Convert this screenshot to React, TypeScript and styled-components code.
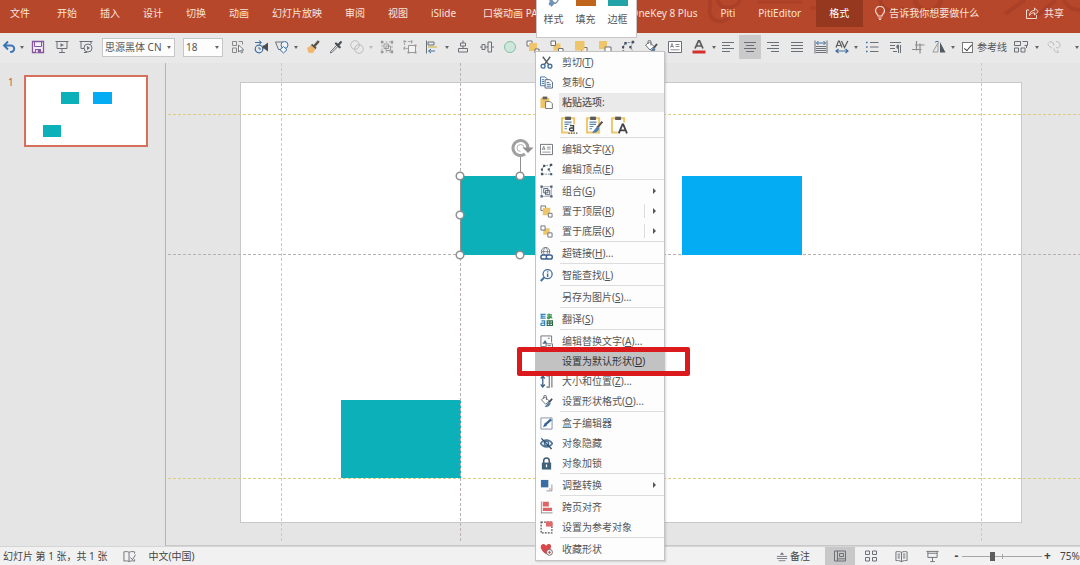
import React from 'react';
import styled, { createGlobalStyle, css } from 'styled-components';

const GlobalStyle = createGlobalStyle`
  * { box-sizing: border-box; }
  html, body, #root { height: 100%; }
  body { margin: 0; overflow: hidden; }
  body, button, select, input {
    font-family: "Noto Sans", "Noto Sans CJK SC", sans-serif;
    font-size: 10px;
    line-height: 14px;
  }
  button, select {
    margin: 0; padding: 0; border: 0; background: none; color: inherit; cursor: pointer;
  }
  ul { margin: 0; padding: 0; list-style: none; }
`;

/* ---------- icons ---------- */

const G = '#6b6f76';
const B = '#3f6f9f';
const Y = '#eec56a';

const drawings: Record<string, React.ReactNode> = {
  undo: <path d="M6 1.500 2 5.500 6 9.500M2.500 5.500H9a3.200 3.200 0 0 1 0 6.400H8" stroke="#3a75b5" strokeWidth="1.900" />,
  save: (
    <>
      <path d="M1.500 1.500h11v11h-11z" stroke="#84579e" strokeWidth="1.300" fill="#f4eef7" />
      <path d="M3.500 2v4.500h7V2" stroke="#84579e" />
      <path d="M4 9h6v3.500H4z" fill="#84579e" />
      <path d="M5.200 10h1.500v2.500H5.200z" fill="#fff" />
    </>
  ),
  show: (
    <>
      <path d="M.5 1.500h13M2 1.500v7h10v-7M7 8.500v4M4 12.500h6" stroke={G} />
      <path d="M5.500 3.200v3.800l3.500-1.900z" fill={G} />
    </>
  ),
  showFrom: (
    <>
      <path d="M.5 1.500h13M2 1.500v7h3M12 1.500V4M5 12.500h3" stroke={G} />
      <circle cx="9" cy="8" r="4" stroke={G} />
      <path d="M8 6v4l3-2z" fill={G} />
    </>
  ),
  pick: (
    <>
      <path d="M1.500 1.500h4v4h-4zM1.500 8h4v4.500h-4zM7.500 1.500h4v3" stroke="#8a8a8a" />
      <path d="M7.500 5v7l1.800-1.700 1.200 2.700 1.200-.6-1.200-2.400h2.300z" fill="#fff" stroke={G} strokeWidth=".9" />
    </>
  ),
  anim: (
    <>
      <circle cx="5" cy="9" r="3.800" stroke={B} strokeWidth="1.200" />
      <path d="M5 7v2h2M1 2.500h6M5 .5l2.500 2L5 4.500" stroke={B} />
      <path d="M8.500 5.500h1.500L14 2.500v9L10 8.500H8.500z" fill="#4b4f55" />
    </>
  ),
  shapes: (
    <>
      <path d="M.5 2h7.500v7.500H3.500z" stroke={G} />
      <circle cx="9.500" cy="5" r="3.500" stroke={B} fill="#edf4fa" />
      <path d="m8.500 6.500 3.500 3.200L8.500 13 5 9.700z" stroke={B} fill="#edf4fa" />
    </>
  ),
  brush: (
    <>
      <path d="M12.800 1 8 6.500" stroke="#59534a" strokeWidth="2.600" />
      <path d="m5.500 4.500 4.500 4" stroke="#59534a" strokeWidth="2" />
      <path d="M5 5.500 1 8l1.500 4.800L7 13l2.300-3.800z" fill="#efb76b" />
    </>
  ),
  dropper: (
    <>
      <path d="M8 5 2 11.200 1.300 13l1.800-.7L9.200 6.200" stroke={G} />
      <path d="m7 3.500 3.700 3.700M9 5.200l2.800-3" stroke="#4b4f55" strokeWidth="2.300" strokeLinecap="round" />
    </>
  ),
  union: (
    <>
      <circle cx="5" cy="5" r="4.300" stroke="#bcbcbc" />
      <circle cx="9" cy="9" r="4.300" stroke="#bcbcbc" />
    </>
  ),
  groupGrey: (
    <>
      <path d="M2 2h10v10H2z" stroke="#aaa" strokeDasharray="2 1.500" />
      <path d="M4 4h4.500v4.500H4zM6 6h4.500v4.500H6z" stroke="#999" />
      <path d="M.8.8h2.400v2.400H.8zM10.800.8h2.400v2.400h-2.400zM.8 10.800h2.400v2.400H.8zM10.800 10.800h2.400v2.400h-2.400z" fill="#999" />
    </>
  ),
  ungroupGrey: (
    <>
      <path d="M1.500 1.500h7v7h-7z" stroke="#aaa" strokeDasharray="2 1.500" />
      <path d="M5.500 5.500h7v7h-7z" stroke="#999" fill="#f3f3f3" />
      <path d="M.5.5h2v2h-2zM7.500.5h2v2h-2zM.5 7.500h2v2h-2zM11.500 4.500h2v2h-2zM4.500 11.500h2v2h-2zM11.500 11.500h2v2h-2z" fill="#999" />
    </>
  ),
  alignObj: (
    <>
      <path d="M1.500.5v13" stroke={G} />
      <path d="M3 2h6v3H3z" stroke={G} />
      <path d="M3 6h9v2H3z" fill="#d8cc8e" />
      <path d="M4 11h6M6 9l-2.500 2L6 13" stroke={B} />
    </>
  ),
  alignMid: <path d="M7 .5V3M7 6v2.500M4.500 3h5v3h-5zM2.500 8.500h9v3.500h-9z" stroke={G} />,
  distribute: <path d="M0 7h2M5 7h3M11.500 7H14M2 4.500h3v5H2zM8 2h3.500v10H8z" stroke={G} />,
  circle: <circle cx="7" cy="7" r="5.500" stroke="#86c1a6" fill="#cfe6db" />,
  front: (
    <>
      <path d="M1 1h5v5H1z" stroke={G} fill="#fff" />
      <path d="M3 3h8v8H3z" fill={Y} />
      <path d="M9 9h4v4H9z" stroke={G} fill="#fff" />
    </>
  ),
  back: (
    <>
      <path d="M3.500 3.500h7v7h-7z" fill={Y} />
      <path d="M1 1h4.500v4.500H1zM8.500 8.500H13V13H8.500z" stroke={G} fill="#fff" />
    </>
  ),
  forward: (
    <>
      <path d="M7.500 7.500H13V13H7.500z" stroke={G} fill="#fff" />
      <path d="M1 1h9.500v9.500H1z" fill={Y} />
    </>
  ),
  backward: (
    <>
      <path d="M1 1h8v8H1z" fill={Y} />
      <path d="M7 7h6v6H7z" stroke={G} fill="#fff" />
    </>
  ),
  points: (
    <>
      <path d="M2.200 12V6.500L4.500 3 12 2 9.500 7l2.700 5H2.200" stroke="#7389a0" strokeDasharray="2 1" />
      <path d="M1 10.800h2.400v2.400H1zM3.300 2h2.400v2.400H3.300zM1 6h2.200v2.200H1zM10.800.8h2.400v2.400h-2.400zM8.300 6h2.200v2.200H8.300zM11 11h2.200v2.200H11z" fill="#44515f" />
    </>
  ),
  fill: (
    <>
      <path d="m1.500 5 4-3L10 6.500 6 10z" stroke={G} fill="#fff" />
      <path d="M4 4V1.800a1.500 1.500 0 0 1 3 0V5.500" stroke={G} />
      <path d="M13 4 9.800 8" stroke="#4b4f55" strokeWidth="2" />
      <path d="M9.500 7.200 5 13c3.500.5 6-1 6.500-4z" fill="#5b7f9e" />
    </>
  ),
  textbox: (
    <>
      <path d="M.5 1.500h13v11H.5z" stroke={G} fill="#fff" />
      <path d="M2.500 7.500 4 3.500l1.500 4M3 6.500h2M7.500 4.500h4M7.500 6.500h4M2.500 9.800h9" stroke={G} strokeWidth=".8" />
    </>
  ),
  fontColor: (
    <>
      <path d="M3 8.500 6.500.8h1L11 8.500M4.500 6h5" stroke="#5a5a5a" strokeWidth="1.700" />
      <path d="M.5 10.500h13v3H.5z" fill="#d5302c" />
    </>
  ),
  left: <path d="M1 2.500h12M1 5.500h8M1 8.500h12M1 11.500h8" stroke={G} />,
  center: <path d="M1 2.500h12M3 5.500h8M1 8.500h12M3 11.500h8" stroke={G} />,
  right: <path d="M1 2.500h12M5 5.500h8M1 8.500h12M5 11.500h8" stroke={G} />,
  justify: <path d="M1 2.500h12M1 5.500h12M1 8.500h12M1 11.500h12" stroke={G} />,
  spread: (
    <>
      <path d="M1 .5v13M13 .5v13M2 6.500h10M2 8.500h10M2 10.500h10M2 12.500h10" stroke={G} />
      <path d="M2.500 3h9M4.500 1l-2 2 2 2M9.500 1l2 2-2 2" stroke={B} />
    </>
  ),
  spacing: (
    <>
      <path d="M1 7.500 3.500 1h.8L7 7.500M2 5.500h4M6.500 1 9.500 7.500 12.800 1" stroke="#5a5a5a" strokeWidth="1.200" />
      <path d="M1 11h12M3.500 9 1 11l2.500 2M10.500 9l2.500 2-2.500 2" stroke={B} strokeWidth="1.200" />
    </>
  ),
  bullets: (
    <>
      <path d="M5 2.500h8.500M5 7h8.500M5 11.500h8.500" stroke={G} />
      <path d="M1 1.700h1.600v1.600H1zM1 6.200h1.600v1.600H1zM1 10.700h1.600v1.600H1z" fill={B} />
    </>
  ),
  indent: (
    <>
      <path d="M2 2.500h11M2 5.500h5M2 8.500h5M5 11.500h4" stroke={G} />
      <path d="M10.500 5v8M12.500 5v8" stroke={G} />
      <path d="M10.500 4.500v4.500a2 2 0 0 1 0-4.500z" fill={G} />
    </>
  ),
  crop: <path d="M5.500 1v9.500M9 3.500V13.500M1 9.500h9.500M4 5h9.500" stroke="#8d8d8d" strokeWidth="1.200" />,
  flip: (
    <>
      <path d="M6 3v9H.8z" stroke="#9a9a9a" />
      <path d="M8 2v10.500h5.500z" fill="#4f5a63" />
      <path d="M3 2.500C4 1 6 1 7 2.500" stroke={B} />
    </>
  ),
  arrange: <path d="M.5 1.500h6v4h-6zM8.500 1.500h5v4h-3M.5 8h4v4h-4zM7 8h4v4H7zM12.500 5.500V8" stroke={G} />,
  rotate: (
    <path d="M3 1.500a4 4 0 0 1 4 4M1 3.500l2-2M9 1.500c3 0 4 2 4 4s-2 3-4 2M5 8c-2-1-4-2-4-4M7 8.500c0 3 2 4 4 4M10 10l2 2.500" stroke="#bcbcbc" />
  ),
  cut: (
    <>
      <path d="M3 .8 9.500 9.500M11 .8 4.500 9.500" stroke="#55585d" strokeWidth="1.500" />
      <circle cx="3.300" cy="11" r="2.100" stroke={B} strokeWidth="1.400" />
      <circle cx="10.700" cy="11" r="2.100" stroke={B} strokeWidth="1.400" />
    </>
  ),
  copy: (
    <>
      <path d="M.6 1h5l2 2v7.500h-7z" stroke={B} fill="#fff" />
      <path d="M5.500 4h5.300l2.600 2.500v6.500H5.500z" stroke="#50607a" fill="#fff" />
      <path d="M2 4h2.500M2 6h2.500M2 8h2.500M7.200 7h3M7.200 9h4.500M7.200 11h4.500" stroke={B} />
    </>
  ),
  paste: (
    <>
      <path d="M.5 2h9.500v11H.5z" fill={Y} />
      <path d="M2.800.6h5v3h-5z" fill="#65615a" />
      <path d="M6 6h5l2.300 2.300v5.200H6z" stroke={G} fill="#fff" />
    </>
  ),
  group: (
    <>
      <path d="M1.800 1.800h10.400v10.400H1.800z" stroke="#a4abb6" />
      <path d="M4 3.800h4.500v4.700H4zM6 5.800h4.500v4.700H6z" stroke="#4c5e78" />
      <path d="M.5.5h2.500V3H.5zM11 .5h2.500V3H11zM.5 11H3v2.500H.5zM11 11h2.500v2.500H11z" fill="#4c5e78" />
    </>
  ),
  link: (
    <>
      <circle cx="6" cy="5" r="4.500" stroke={G} />
      <path d="M1.500 5h9M6 .5c-3 3-3 6 0 9M6 .5c3 3 3 6 0 9" stroke={G} strokeWidth=".9" />
      <rect x="1" y="8.500" width="6.500" height="4.500" rx="2" stroke="#3c5f92" strokeWidth="1.600" fill="#fff" />
      <rect x="6.800" y="8.500" width="6.400" height="4.500" rx="2" stroke="#3c5f92" strokeWidth="1.600" fill="#fff" />
    </>
  ),
  lookup: (
    <>
      <circle cx="8.200" cy="5.500" r="4.900" stroke="#45719f" strokeWidth="1.400" />
      <path d="M4.700 9 .8 13" stroke="#45719f" strokeWidth="2.200" />
      <path d="M8.200 2.500v1.300M8.200 4.800v3.700" stroke="#45719f" strokeWidth="1.600" />
    </>
  ),
  translate: (
    <>
      <path d="M.5 1.500h5.500M.5 3.500h5.500M.5 5.500h5.500M2 1v5" stroke="#2f86c2" strokeWidth="1.200" />
      <path d="M1.500 8.500h3.500v5H2.200a1.200 1.200 0 0 1 0-2.500H5" stroke="#2f86c2" strokeWidth="1.400" />
      <path d="M7.500 2h5.500M9.800.5v5.500M12 3C12 6 8 7 8 5.200S12.800 3.500 13 6" stroke="#3c9a50" strokeWidth="1.300" />
      <path d="M7.800 8.500h5.700v5H7.800zM7.800 11h5.700M10.600 8.500v5" stroke="#2d6a49" strokeWidth="1.300" />
    </>
  ),
  altText: (
    <>
      <path d="M6 12.500H1V1h11.500v7" stroke={G} />
      <path d="m2.500 9.500 3-4 2.500 4z" fill="#4b6b8a" />
      <path d="M8.500 3.500h2" stroke={G} />
      <path d="M6.500 9.500h7v4h-7zM8 11.500h4" stroke={G} fill="#fff" />
    </>
  ),
  size: (
    <>
      <path d="M3 1.500v11M.8 3.800 3 1.200l2.200 2.600M.8 10.200 3 12.800l2.200-2.600" stroke="#3e6388" strokeWidth="1.400" />
      <path d="M7 1h3v12H7M12.800.5v13" stroke={G} strokeWidth="1.200" />
    </>
  ),
  edit: (
    <>
      <path d="M1 1h12v12H1z" stroke="#7d8fa3" fill="#fff" />
      <path d="M12 2.500 6 8" stroke="#31628f" strokeWidth="2.400" />
      <path d="m5.200 6.500-2 4.500L7.500 9.500z" fill="#31628f" />
    </>
  ),
  hide: (
    <>
      <path d="M.5 7C4 2 10 2 13.500 7 10 12 4 12 .5 7z" stroke="#4c6f93" strokeWidth="1.500" />
      <circle cx="7" cy="7" r="2.300" stroke="#4c6f93" strokeWidth="1.600" />
      <path d="m1.500 1.500 11 11.500" stroke="#31506f" strokeWidth="1.500" />
    </>
  ),
  lock: (
    <>
      <path d="M4 6.500V4a3 3 0 0 1 6 0v2.500" stroke="#3e5b70" strokeWidth="1.600" />
      <path d="M2 6h10v7.500H2z" fill="#3f6277" />
      <path d="M6.300 8h1.400v3H6.300z" fill="#fff" />
    </>
  ),
  convert: (
    <>
      <path d="M1 1h8v8H1z" fill="#3a6ea5" />
      <path d="M12.800 6v6.800H7" stroke="#8793a0" />
      <path d="M10 10h1.500v1.500H10z" fill="#e0936b" />
    </>
  ),
  cross: (
    <>
      <path d="M1.500.5v13" stroke="#a98a8a" />
      <path d="M3 .8h6.500v5H3zM3 7.200h10v3.600H3z" fill="#dd6467" />
      <path d="M1.500 12.800h12" stroke="#8b8b8b" />
    </>
  ),
  refer: (
    <>
      <path d="M1.200 1.200h11.600v11.600H1.200z" stroke="#555" strokeWidth="1.400" strokeDasharray="2 1.200" />
      <path d="M6.500.5h7v5.500h-7z" fill="#e2666a" />
    </>
  ),
  heart: (
    <>
      <path d="M6.500 12C-1 7 0 2 3.200 1.200 5 .9 6 2.200 6.500 3.200 7 2.200 8 .9 10 1.200c3 .5 3 5.300-3.500 10.800z" fill="#d9484a" />
      <circle cx="10.200" cy="10" r="3.200" stroke="#6d6262" fill="#fff" />
      <path d="M10.200 8.300v3.400M8.500 10h3.400" stroke="#c9484a" />
    </>
  ),
  bulb: (
    <path d="M5 10c0-2-2.500-2.500-2.500-5.200a4.500 4.500 0 0 1 9 0C11.500 7.500 9 8 9 10zM5.200 12h3.600M6 13.500h2" stroke="#f6d9cd" strokeWidth="1.200" />
  ),
  share: (
    <path d="M4 4H1.500v8.500h10V9M4.500 9.500c0-3.500 2-5 5-5V2L13.200 5.500 9.500 9V6.800c-2.500 0-4 .7-5 2.700z" stroke="#f6d9cd" />
  ),
  spell: (
    <path d="M6.500 2.500v10M6.500 2.500C5 1.500 3 1.500 1 2v10c2-.5 4-.5 5.500.5M6.500 2.500C8 1.500 10.500 1.500 12.500 2v2M8 8l2.200 2.500L13.500 5M6.500 12.500c1.500-1 4-1 6-.5V10" stroke={G} />
  ),
  notes: (
    <>
      <path d="M1 7.500h12M1 9.900h12M3 12.500h8" stroke={G} />
      <path d="M4.500 5.500 7 2.500l2.500 3z" fill={G} />
    </>
  ),
  normal: <path d="M1.500 2h11v10h-11zM4.500 2v10M6.500 4.500h4v3h-4zM5 9.800h7" stroke={G} />,
  sorter: <path d="M1.500 2h4v3.500h-4zM8.500 2h4v3.500h-4zM1.500 8.500h4V12h-4zM8.500 8.500h4V12h-4z" stroke={G} />,
  reading: (
    <path d="M7 2.500v10.500M7 2.500C5 1.500 3 1.500 1 2v9.500C3 11 5 11.500 7 12.500 9 11.500 11 11 13 11.500V2C11 1.500 9 1.500 7 2.500M2.800 4.500h2.700M2.800 6.500h2.700M2.800 8.500h2.700M8.500 4.500h2.700M8.500 6.500h2.700M8.500 8.500h2.700" stroke={G} />
  ),
  slideshow: <path d="M.5 1.500h13M2 1.500v6.500h10V1.500M2 3.500h10M7 8v4.500M4.500 12.500h5" stroke={G} />,
  style: (
    <>
      <path d="M2 3c1 5 3 7 7 6M12 3c0 3-1 4-3 6" stroke="#7b8da3" strokeWidth="1.300" />
      <path d="M4 4.500 8 9l-3.500 4c-.5-2-2-1.500-3-2.500z" fill="#6f92b9" />
    </>
  ),
  pasteTheme: (
    <>
      <path d="M1.500 1.800h9.500v11H1.500z" stroke={Y} strokeWidth="1.500" fill="#fff" />
      <path d="M4 .5h4.500v2.600H4z" fill="#5b5b5b" />
      <path d="M3.500 4.800h5.500M3.500 6.500h5.500M3.500 8.200h2M3.500 9.900h2" stroke="#5b84ab" strokeWidth=".9" />
      <path d="M6.500 6.500h7v6.500h-7z" fill="#fff" />
      <path d="M7.800 7.500h2.700v4H8.500a1.100 1.100 0 0 1 0-2.200h2M6.500 13.300h1M8.500 13.300h1M10.500 13.300h1M12.500 13.300h1" stroke="#444" strokeWidth="1.100" />
    </>
  ),
  pasteSource: (
    <>
      <path d="M1.500 1.800h9.500v11H1.500z" stroke={Y} strokeWidth="1.500" fill="#fff" />
      <path d="M4 .5h4.500v2.600H4z" fill="#5b5b5b" />
      <path d="M3.500 4.800h5.500M3.500 6.500h5M3.500 8.200h3M3.500 9.900h2" stroke="#5b84ab" strokeWidth=".9" />
      <path d="M13.500 4.500 9.500 9" stroke="#555" strokeWidth="1.600" />
      <path d="M9.500 8 5.500 13c3 .5 5-1 5.500-3.500z" fill="#4a7cb0" />
    </>
  ),
  pasteText: (
    <>
      <path d="M6 12.800H1.500v-11H11V5" stroke={Y} strokeWidth="1.500" />
      <path d="M4 .5h4.500v2.600H4z" fill="#5b5b5b" />
      <path d="M6.800 13.500 9.700 6.500h.6l2.900 7M7.800 11.200h4.500" stroke="#444" strokeWidth="1.400" />
    </>
  ),
};

const Glyph = styled.svg`
  display: block;
  flex: none;
  fill: none;
`;

const Icon = ({ name, size = 14 }: { name: string; size?: number }) => (
  <Glyph width={size} height={size} viewBox="0 0 14 14" aria-hidden="true">
    {drawings[name]}
  </Glyph>
);

/* ---------- ribbon ---------- */

const Window = styled.div`
  position: relative;
  display: flex;
  flex-direction: column;
  height: 100%;
  min-height: 565px;
  overflow: hidden;
  background: #e6e5e6;
  color: #555;
`;

const Ribbon = styled.nav`
  position: relative;
  display: flex;
  flex: none;
  height: 33px;
  padding-right: 16px;
  background: #b7472b;
  color: #f9e4db;
  white-space: nowrap;
`;

const RibbonArt = styled.svg`
  position: absolute;
  top: 0;
  right: 0;
  fill: none;
  stroke: #aa4027;
`;

const Tab = styled.button<{ $active?: boolean; $lead?: number }>`
  position: relative;
  flex: none;
  height: 27px;
  margin-left: ${(p) => p.$lead ?? 0}px;
  padding: 0 13px 1px 10px;
  ${(p) => p.$active && css`background: #963820; color: #fff; padding: 0 14px 1px 13px;`}
`;

const TellMe = styled(Tab)`
  display: flex;
  align-items: center;
  gap: 2px;
`;

const Spacer = styled.div`
  flex: 1;
`;

const Share = styled(TellMe)`
  gap: 5px;
  padding: 0 0 2px;
`;

/* ---------- quick toolbar ---------- */

const Toolbar = styled.div`
  display: flex;
  flex: none;
  align-items: center;
  height: 30px;
  padding-bottom: 2px;
  background: #e9e9ea;
  white-space: nowrap;
`;

const Tool = styled.button<{ $w?: number; $on?: boolean }>`
  display: flex;
  flex: none;
  align-items: center;
  justify-content: center;
  width: ${(p) => p.$w ?? 24}px;
  height: 24px;
  background: ${(p) => (p.$on ? '#cbcacb' : 'none')};
`;

const CaretShape = styled.span<{ $pale?: boolean }>`
  display: block;
  border: 2px solid transparent;
  border-top: 3px solid ${(p) => (p.$pale ? '#bbb' : '#666')};
  border-bottom: 0;
`;

const SelectBox = styled.div<{ $w: number }>`
  position: relative;
  flex: none;
  width: ${(p) => p.$w}px;
  height: 19px;
  margin: 0 4px;
  background: #fdfdfd;
  border: 1px solid #c6c6c6;

  select {
    width: 100%;
    height: 100%;
    padding-left: 2px;
    appearance: none;
  }

  span {
    position: absolute;
    top: 7px;
    right: 3px;
    pointer-events: none;
  }
`;

const CheckLabel = styled.label`
  display: flex;
  flex: none;
  align-items: center;
  gap: 4px;
  margin: 0 3px 0 5px;
`;

const CheckBox = styled.input`
  position: relative;
  width: 11px;
  height: 11px;
  margin: 0;
  appearance: none;
  background: #fff;
  border: 1px solid #777;

  &:checked::after {
    content: '';
    position: absolute;
    top: 0;
    left: 3px;
    width: 3px;
    height: 7px;
    border: solid #444;
    border-width: 0 1px 1px 0;
    transform: rotate(40deg);
  }
`;

type ToolSpec = { icon?: string; w?: number; on?: boolean; label: string; pale?: boolean };
const t = (icon: string, label: string, w?: number, on?: boolean): ToolSpec => ({ icon, label, w, on });
const caret = (w = 10, pale = false): ToolSpec => ({ w, pale, label: '更多' });

const toolsStart = [t('undo', '撤销', 18), caret(8), t('save', '保存'), t('show', '从头放映'), t('showFrom', '从当前放映')];
const toolsMain = [
  t('pick', '选择', 22), t('anim', '动画'), t('shapes', '形状', 18), caret(10), t('brush', '格式刷'),
  t('dropper', '取色器', 22), t('union', '合并形状', 20), caret(8, true), t('groupGrey', '组合'),
  t('ungroupGrey', '取消组合', 22), t('alignObj', '对齐', 22), caret(8), t('alignMid', '居中对齐'),
  t('distribute', '分布'), t('circle', '椭圆', 22), t('front', '置于顶层'), t('back', '置于底层'),
  t('forward', '上移一层'), t('backward', '下移一层'), t('points', '编辑顶点', 22), t('fill', '填充'),
  t('textbox', '文本框'), t('fontColor', '字体颜色'), caret(6), t('left', '左对齐', 22),
  t('center', '居中', 22, true), t('right', '右对齐'), t('justify', '两端对齐'), t('spread', '分散对齐'),
  t('spacing', '字符间距', 18), caret(10), t('bullets', '项目符号', 22), t('indent', '文字方向'),
  t('crop', '裁剪', 22), t('flip', '翻转', 20), caret(8),
];
const toolsEnd = [t('arrange', '排列', 22), caret(10), t('rotate', '旋转'), caret(22)];

const Tools = ({ items }: { items: ToolSpec[] }) => (
  <>
    {items.map((s, i) => (
      <Tool key={i} $w={s.w} $on={s.on} aria-label={s.label}>
        {s.icon ? <Icon name={s.icon} /> : <CaretShape $pale={s.pale} />}
      </Tool>
    ))}
  </>
);

/* ---------- slide area ---------- */

const Main = styled.main`
  display: flex;
  flex: 1;
  min-height: 0;
`;

const Thumbs = styled.aside`
  display: flex;
  flex: none;
  align-items: flex-start;
  gap: 10px;
  width: 166px;
  padding: 12px 0 0 8px;
  border-right: 1px solid #b5b4b5;
  color: #c8553d;
`;

const ThumbSlide = styled.button`
  position: relative;
  width: 124px;
  height: 72px;
  background: #fff;
  border: 2px solid #d5705c;
`;

const Block = styled.span<{ $x: number; $y: number; $w: number; $h: number; $c: string }>`
  position: absolute;
  left: ${(p) => p.$x}px;
  top: ${(p) => p.$y}px;
  width: ${(p) => p.$w}px;
  height: ${(p) => p.$h}px;
  background: ${(p) => p.$c};
`;

const Canvas = styled.section`
  position: relative;
  display: flex;
  flex: 1;
  padding: 19px 58px 22px 74px;
  border-bottom: 1px solid #c9c8c9;
`;

const Slide = styled.div`
  position: relative;
  flex: 1;
  background: #fff;
  border: 1px solid #c9c8c9;
`;

const guideLine = (color: string, dir: string) =>
  `repeating-linear-gradient(to ${dir}, ${color} 0 3px, transparent 3px 5px)`;

const VGuide = styled.span<{ $x: number; $c: string }>`
  position: absolute;
  top: 0;
  bottom: 2px;
  left: ${(p) => p.$x}px;
  width: 1px;
  background: ${(p) => guideLine(p.$c, 'bottom')};
`;

const HGuide = styled.span<{ $y: number; $c: string }>`
  position: absolute;
  left: 2px;
  right: 0;
  top: ${(p) => p.$y}px;
  height: 1px;
  background: ${(p) => guideLine(p.$c, 'right')};
`;

const Selection = styled.svg`
  position: absolute;
  left: 282px;
  top: 70px;
  fill: #fff;
  stroke: #8f8f8f;
`;

const TEAL = '#0bb0b8';
const BLUE = '#04adf3';
const GOLD = '#dccd80';
const MAUVE = '#b9b0b6';

/* ---------- floating panels ---------- */

const MiniBar = styled.div`
  position: absolute;
  z-index: 2;
  top: 0;
  left: 536px;
  display: flex;
  justify-content: center;
  width: 101px;
  height: 38px;
  padding-right: 2px;
  background: #fff;
  border: 1px solid #c9c5c4;
  border-top: 0;
`;

const MiniButton = styled.button`
  display: flex;
  flex-direction: column;
  align-items: center;
  width: 32px;
  height: 26px;
  justify-content: space-between;
`;

const Swatch = styled.span<{ $c: string }>`
  width: 20px;
  height: 6px;
  background: ${(p) => p.$c};
`;

const MiniIcon = styled.span`
  height: 8px;
  display: flex;
  align-items: flex-end;
  overflow: hidden;
`;

const Menu = styled.ul`
  position: absolute;
  z-index: 3;
  top: 51px;
  left: 535px;
  width: 130px;
  padding-bottom: 1px;
  background: #fdfdfd;
  border: 1px solid #c4c3c4;
  box-shadow: 1px 1px 2px rgba(0, 0, 0, 0.15);
`;

const Item = styled.button<{ $hot?: boolean }>`
  display: grid;
  grid-template-columns: 22px 1fr 16px;
  align-items: center;
  width: 100%;
  height: 20px;
  padding-left: 4px;
  text-align: left;
  white-space: nowrap;
  ${(p) => p.$hot && css`background: #c3c2c3; color: #333;`}
`;

const Arrow = styled.span<{ $split?: boolean }>`
  display: flex;
  align-items: center;
  justify-content: center;
  height: 14px;
  margin-left: -4px;
  border-left: 1px solid ${(p) => (p.$split ? '#dcdcdc' : 'transparent')};

  &::before {
    content: '';
    border: 3px solid transparent;
    border-left: 3px solid #555;
    border-right: 0;
  }
`;

const Divider = styled.li`
  height: 1px;
  margin: 0 0 1px 24px;
  background: #dedddd;
`;

const Heading = styled.li`
  display: flex;
  align-items: center;
  height: 20px;
  padding-left: 4px;
  font-weight: 500;

  span {
    display: flex;
    flex: 1;
    align-items: center;
    height: 19px;
    margin-left: 6px;
    padding-left: 3px;
    background: #eaeaea;
  }
`;

const PasteRow = styled.li`
  display: flex;
  align-items: center;
  gap: 7px;
  height: 25px;
  padding-left: 24px;
`;

const Callout = styled.div`
  position: absolute;
  z-index: 4;
  top: 347px;
  left: 517px;
  width: 173px;
  height: 29px;
  border: 5px solid #da1a1c;
  border-radius: 2px;
  pointer-events: none;
`;

type Entry = { icon?: string; text: string; k?: string; tail?: string; sub?: 'plain' | 'split'; hot?: boolean };

const topEntries: Entry[] = [
  { icon: 'cut', text: '剪切', k: 'T' },
  { icon: 'copy', text: '复制', k: 'C' },
];

const groups: Entry[][] = [
  [{ icon: 'textbox', text: '编辑文字', k: 'X' }, { icon: 'points', text: '编辑顶点', k: 'E' }],
  [
    { icon: 'group', text: '组合', k: 'G', sub: 'plain' },
    { icon: 'front', text: '置于顶层', k: 'R', sub: 'split' },
    { icon: 'back', text: '置于底层', k: 'K', sub: 'split' },
  ],
  [{ icon: 'link', text: '超链接', k: 'H', tail: '...' }],
  [{ icon: 'lookup', text: '智能查找', k: 'L' }],
  [{ text: '另存为图片', k: 'S', tail: '...' }],
  [{ icon: 'translate', text: '翻译', k: 'S' }],
  [
    { icon: 'altText', text: '编辑替换文字', k: 'A', tail: '...' },
    { text: '设置为默认形状', k: 'D', hot: true },
    { icon: 'size', text: '大小和位置', k: 'Z', tail: '...' },
    { icon: 'fill', text: '设置形状格式', k: 'O', tail: '...' },
  ],
  [
    { icon: 'edit', text: '盒子编辑器' },
    { icon: 'hide', text: '对象隐藏' },
    { icon: 'lock', text: '对象加锁' },
  ],
  [{ icon: 'convert', text: '调整转换', sub: 'plain' }],
  [{ icon: 'cross', text: '跨页对齐' }, { icon: 'refer', text: '设置为参考对象' }],
  [{ icon: 'heart', text: '收藏形状' }],
];

const MenuRow = ({ e }: { e: Entry }) => (
  <li role="none">
    <Item role="menuitem" $hot={e.hot}>
      {e.icon ? <Icon name={e.icon} size={13} /> : <i />}
      <span>
        {e.text}
        {e.k && <>(<u>{e.k}</u>)</>}
        {e.tail}
      </span>
      {e.sub && <Arrow $split={e.sub === 'split'} />}
    </Item>
  </li>
);

/* ---------- status bar ---------- */

const Status = styled.footer`
  display: flex;
  flex: none;
  align-items: center;
  height: 19px;
  padding-left: 3px;
  border-top: 1px solid #d6d5d6;
  background: #f2f1f2;
  color: #444;
  white-space: nowrap;
`;

const StatusButton = styled.button<{ $on?: boolean; $w?: number; $lead?: number }>`
  display: flex;
  flex: none;
  align-items: center;
  justify-content: center;
  gap: 2px;
  width: ${(p) => (p.$w ? `${p.$w}px` : 'auto')};
  height: 18px;
  margin-left: ${(p) => p.$lead ?? 0}px;
  background: ${(p) => (p.$on ? '#c9c8c9' : 'none')};
`;

const ZoomGroup = styled.div`
  display: flex;
  flex: none;
  align-items: center;
  margin-left: 3px;
`;

const Zoom = styled.input`
  width: 80px;
  height: 14px;
  margin: 0;
  appearance: none;
  background: linear-gradient(#a5a5a5, #a5a5a5) center / 100% 1px no-repeat,
    linear-gradient(#a5a5a5, #a5a5a5) center / 1px 5px no-repeat;

  &::-webkit-slider-thumb {
    appearance: none;
    width: 5px;
    height: 9px;
    background: #5c5c5c;
  }
`;

const Sign = styled.button`
  width: 11px;
  font-size: 12px;
  font-weight: 700;
`;

const ZoomValue = styled.output`
  flex: none;
  width: 27px;
  padding-left: 7px;
`;

const App = () => (
  <Window>
    <GlobalStyle />
    <Ribbon>
      <RibbonArt width="400" height="33" viewBox="0 0 400 33" aria-hidden="true">
        <path d="M30 0v8a10 10 0 0 0 20 6M38 0c0 10 18 10 22 0" strokeWidth="4" />
        <path d="M78 2h44M130 8h40" strokeWidth="3" />
        <circle cx="248" cy="-2" r="13" strokeWidth="5" />
        <path d="M200 0c2 10 14 14 24 8M325 14 345 0M352 20 376 0M384 0c4 8 10 10 16 10" strokeWidth="4" />
      </RibbonArt>
      <Tab>文件</Tab>
      <Tab $lead={4}>开始</Tab>
      <Tab>插入</Tab>
      <Tab>设计</Tab>
      <Tab>切换</Tab>
      <Tab>动画</Tab>
      <Tab>幻灯片放映</Tab>
      <Tab>审阅</Tab>
      <Tab>视图</Tab>
      <Tab>iSlide</Tab>
      <Tab $lead={4}>口袋动画 PA</Tab>
      <Tab $lead={70}>OneKey 8 Plus</Tab>
      <Tab>Piti</Tab>
      <Tab>PitiEditor</Tab>
      <Tab $active $lead={2}>格式</Tab>
      <TellMe>
        <Icon name="bulb" />
        告诉我你想要做什么
      </TellMe>
      <Spacer />
      <Share>
        <Icon name="share" />
        共享
      </Share>
    </Ribbon>

    <Toolbar role="toolbar">
      <Tools items={toolsStart} />
      <SelectBox $w={73}>
        <select aria-label="字体"><option>思源黑体 CN</option></select>
        <CaretShape />
      </SelectBox>
      <SelectBox $w={40}>
        <select aria-label="字号"><option>18</option></select>
        <CaretShape />
      </SelectBox>
      <Tools items={toolsMain} />
      <CheckLabel>
        <CheckBox type="checkbox" defaultChecked />
        参考线
      </CheckLabel>
      <Tools items={toolsEnd} />
    </Toolbar>

    <Main>
      <Thumbs>
        <span>1</span>
        <ThumbSlide aria-label="幻灯片 1">
          <Block $x={35} $y={15} $w={18} $h={12} $c={TEAL} />
          <Block $x={67} $y={15} $w={19} $h={12} $c={BLUE} />
          <Block $x={17} $y={48} $w={18} $h={12} $c={TEAL} />
        </ThumbSlide>
      </Thumbs>
      <Canvas>
        <Slide />
        <VGuide $x={115} $c={GOLD} />
        <VGuide $x={815} $c={GOLD} />
        <HGuide $y={51} $c={GOLD} />
        <HGuide $y={415} $c={GOLD} />
        <HGuide $y={191} $c={MAUVE} />
        <Block $x={294} $y={113} $w={120} $h={79} $c={TEAL} />
        <Block $x={516} $y={113} $w={120} $h={79} $c={BLUE} />
        <Block $x={175} $y={337} $w={120} $h={78} $c={TEAL} />
        <VGuide $x={294} $c={MAUVE} />
        <Selection width="140" height="130" viewBox="0 0 140 130" aria-hidden="true">
          <path d="M12.500 43v79M72.500 22v22" fill="none" strokeWidth="1" />
          <path d="M80 15a7.500 7.500 0 1 0-3 6" fill="none" strokeWidth="3" stroke="#a0a0a0" />
          <path d="M76 15a3.500 3.500 0 1 0-3.500 3.500" fill="none" strokeWidth="1" stroke="#b5b5b5" />
          <path d="M74.500 14.500h11l-5.500 5.500z" fill="#909090" stroke="none" />
          {[[12, 43], [72, 43], [12, 82], [12, 122], [72, 122]].map(([x, y]) => (
            <circle key={`${x}-${y}`} cx={x} cy={y} r="3.800" strokeWidth="1.500" />
          ))}
        </Selection>
      </Canvas>
    </Main>

    <Status>
      <span>幻灯片 第 1 张，共 1 张</span>
      <StatusButton $lead={16} aria-label="拼写检查"><Icon name="spell" size={13} /></StatusButton>
      <StatusButton $lead={12}>中文(中国)</StatusButton>
      <Spacer />
      <StatusButton><Icon name="notes" size={12} />备注</StatusButton>
      <StatusButton $on $w={30} $lead={15} aria-label="普通视图"><Icon name="normal" /></StatusButton>
      <StatusButton $w={31} aria-label="幻灯片浏览"><Icon name="sorter" /></StatusButton>
      <StatusButton $w={31} aria-label="阅读视图"><Icon name="reading" size={13} /></StatusButton>
      <StatusButton $w={31} aria-label="幻灯片放映"><Icon name="slideshow" size={13} /></StatusButton>
      <ZoomGroup>
        <Sign aria-label="缩小">-</Sign>
        <Zoom type="range" min={0} max={100} defaultValue={37} aria-label="缩放" />
        <Sign aria-label="放大">+</Sign>
        <ZoomValue>75%</ZoomValue>
      </ZoomGroup>
    </Status>

    <MiniBar>
      <MiniButton><MiniIcon><Icon name="style" /></MiniIcon>样式</MiniButton>
      <MiniButton><Swatch $c="#c0651c" />填充</MiniButton>
      <MiniButton><Swatch $c="#21a3a8" />边框</MiniButton>
    </MiniBar>

    <Menu role="menu">
      {topEntries.map((e) => <MenuRow key={e.text} e={e} />)}
      <Heading role="presentation"><Icon name="paste" size={13} /><span>粘贴选项:</span></Heading>
      <PasteRow role="none">
        <Tool $w={18} role="menuitem" aria-label="使用目标主题"><Icon name="pasteTheme" size={18} /></Tool>
        <Tool $w={18} role="menuitem" aria-label="保留源格式"><Icon name="pasteSource" size={18} /></Tool>
        <Tool $w={18} role="menuitem" aria-label="只保留文本"><Icon name="pasteText" size={18} /></Tool>
      </PasteRow>
      {groups.map((g, i) => (
        <React.Fragment key={i}>
          <Divider role="separator" />
          {g.map((e) => <MenuRow key={e.text} e={e} />)}
        </React.Fragment>
      ))}
    </Menu>
    <Callout />
  </Window>
);

export default App;
